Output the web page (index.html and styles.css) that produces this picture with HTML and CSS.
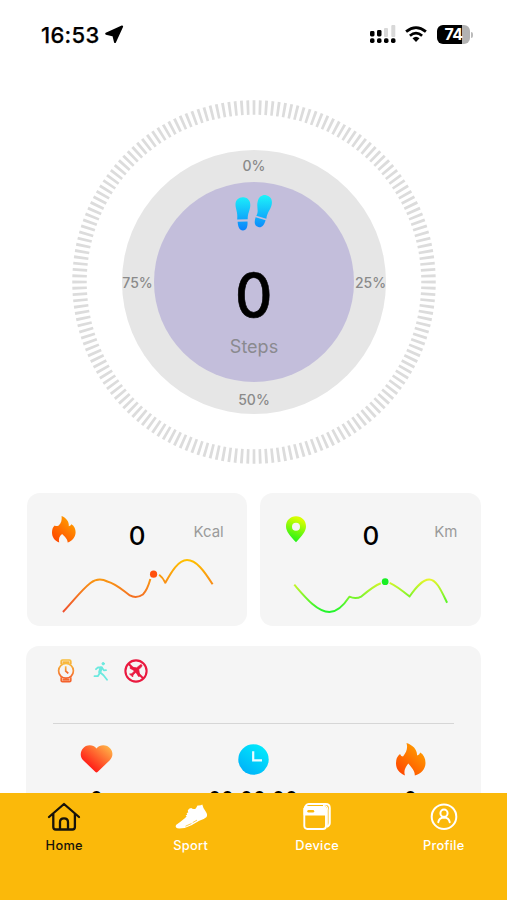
FILE: index.html
```html
<!DOCTYPE html>
<html lang="en">
<head>
<meta charset="utf-8">
<title>Activity</title>
<link rel="stylesheet" href="styles.css">
</head>
<body>
<svg class="defs" width="0" height="0" aria-hidden="true">
  <defs>
    <linearGradient id="fire" x1="0" y1="1" x2=".8" y2="0"><stop offset="0" stop-color="#ff3d00"/><stop offset="1" stop-color="#ffa500"/></linearGradient>
    <linearGradient id="fireline" x1="0" y1="1" x2="0" y2="0"><stop offset="0" stop-color="#ef5030"/><stop offset="1" stop-color="#ffc000"/></linearGradient>
    <linearGradient id="lime" x1="0" y1="1" x2=".3" y2="0"><stop offset="0" stop-color="#00f01c"/><stop offset="1" stop-color="#d8ff00"/></linearGradient>
    <linearGradient id="limeline" x1="0" y1="1" x2="0" y2="0"><stop offset="0" stop-color="#20f52c"/><stop offset="1" stop-color="#e6f52a"/></linearGradient>
    <linearGradient id="steps" gradientUnits="userSpaceOnUse" x1="0" y1="0" x2="0" y2="36"><stop offset="0" stop-color="#1cf4fa"/><stop offset="1" stop-color="#0a80fc"/></linearGradient>
    <linearGradient id="watch" x1="0" y1="1" x2="0" y2="0"><stop offset="0" stop-color="#f4602c"/><stop offset="1" stop-color="#f8bd3c"/></linearGradient>
    <linearGradient id="heart" x1=".2" y1=".8" x2=".9" y2=".1"><stop offset="0" stop-color="#ff1515"/><stop offset="1" stop-color="#ffad45"/></linearGradient>
    <linearGradient id="clock" x1="0" y1="1" x2=".7" y2="0"><stop offset="0" stop-color="#00aaf8"/><stop offset="1" stop-color="#00e9fc"/></linearGradient>
    <symbol id="flame" viewBox="0 0 30 33"><path d="M10.5 0C17 2 21.5 7 21 12.5Q23.5 11.8 24.3 9.5C27.5 11.5 29.5 15 29.5 20C29.5 26 25 31 18.8 32.5C19 28 16 25 12.3 20.5C9 25 7.5 28 9 32.5C3 30 0 26 0 20Q0 14 4 11Q5 13.5 7 13.5C10.5 9 12 5 10.5 0Z"/></symbol>
  </defs>
</svg>

<div class="screen">
  <header class="status">
    <div class="status-left">
      <span class="time">16:53</span>
      <svg width="19" height="19" viewBox="0 0 19 19"><path d="M17.1 1.5L10 17L8.4 10.5L1.2 8.7Z" fill="#000" stroke="#000" stroke-width="2" stroke-linejoin="round"/></svg>
    </div>
    <div class="status-right">
      <svg width="26" height="19" viewBox="0 0 26 19"><g fill="#d8d8d8"><rect x="14" y="3" width="4" height="9" rx="1"/><rect x="21.3" y="0" width="4" height="12" rx="1"/></g><rect x="0" y="6" width="4.5" height="5.5" rx="1.4"/><rect x="7" y="5" width="4.5" height="6.5" rx="1.4"/><rect x="0" y="13.3" width="4.5" height="4.6" rx="1.6"/><rect x="7" y="13.3" width="4.5" height="4.6" rx="1.6"/><rect x="14" y="13.3" width="4.5" height="4.6" rx="1.6"/><rect x="21" y="13.3" width="4.5" height="4.6" rx="1.6"/></svg>
      <svg class="wifi" width="22" height="17" viewBox="0 0 22 17" fill="none" stroke="#000" stroke-width="2.8"><path d="M1.1 5.7Q11-2.5 20.9 5.7M4.9 9.7Q11 4.6 17.1 9.7"/><path d="M7.5 12.3Q11 9.3 14.5 12.3L11 16Z" fill="#000" stroke="none"/></svg>
      <div class="battery"><span>74</span></div>
      <i class="battery-tip"></i>
    </div>
  </header>

  <section class="dial">
    <svg class="ticks" width="364" height="364" viewBox="0 0 364 364"><circle cx="182" cy="182" r="174.5" pathLength="360" fill="none" stroke="#dcdcdc" stroke-width="14.5" stroke-dasharray=".9 1.1" stroke-dashoffset=".45"/></svg>
    <div class="ring">
      <span class="mark top">0%</span>
      <span class="mark left">75%</span>
      <div class="core">
        <svg class="feet" width="38" height="37" viewBox="0 0 38 37" fill="url(#steps)"><path d="M2.2 24.5C3 17 .5 14 .5 9.5C.5 5 4 2 8.3 2.3C13 2.7 15.8 6 15.3 11C14.8 16 12.7 18 12.7 24.2ZM2.6 26.7L12.5 26.4C12.9 31.5 11.5 35.3 8 35.4C4.5 35.5 3 32 2.6 26.7Z"/><path d="M21.3 20.8C24.3 15.5 21.2 12.5 22.7 6.5C23.8 1.5 27.5-.5 31.2.2C35.8 1.2 37.8 5 36.6 10C35.4 15 31.8 18 31.4 23.8ZM20.6 22.3L30.6 25.2C29.1 30.2 26.6 33 23.4 32.1C19.2 31 19.1 26.9 20.6 22.3Z"/></svg>
        <strong>0</strong>
        <span class="unit">Steps</span>
      </div>
      <span class="mark right">25%</span>
      <span class="mark bottom">50%</span>
    </div>
  </section>

  <section class="cards">
    <article class="card">
      <div class="card-head">
        <svg width="24" height="27" viewBox="0 0 30 33" preserveAspectRatio="none" fill="url(#fire)"><path d="M12 0C18 2.5 21.5 7 21 12.5Q23.5 11.8 24.3 10C28 12 29.5 16 29.5 20C29.5 26 25 31 19.5 32.5C20 29 16 25 12.6 22C9 25 8 28 9 32.5C3 30 0 26 0 20Q0 14 3.5 11.5Q5 12.7 8 11.8C11.7 9 12.5 5 12 0Z"/></svg>
        <strong>0</strong><span>Kcal</span>
      </div>
      <svg class="chart" width="221" height="74" viewBox="26.5 552 221 74"><path d="M62.5 612C72 602 81 590 90 583Q98 577 107 581.5C116 584 122 590 129.5 595.5Q136 599 142.5 594.5Q147 590 150 579M158.8 574.8Q162.5 577.5 165 582.7C171 572 178 560 186.7 560C196 560 204 571 212.3 584.3" fill="none" stroke="url(#fireline)" stroke-width="2" stroke-linejoin="round"/><circle cx="153.2" cy="574.2" r="3.6" fill="#ff500d"/></svg>
    </article>
    <article class="card">
      <div class="card-head km">
        <svg width="22" height="27" viewBox="0 0 22 27"><path d="M11 .2C16.8.2 21 4.5 21 10.3C21 15.5 17 20 11 26.3C5 20 1 15.5 1 10.3C1 4.5 5.2.2 11 .2ZM11 6.8a4 4 0 1 0 0 8a4 4 0 1 0 0-8Z" fill="url(#lime)" fill-rule="evenodd"/></svg>
        <strong>0</strong><span>Km</span>
      </div>
      <svg class="chart" width="221" height="74" viewBox="260 552 221 74"><path d="M294.3 584.7C305 597 317 612 329.5 612C338 612 344 605 349.5 596.7Q356 599.5 361.7 596.3C368 591 374 586 381 583.3M389.8 582.8C397 586 403 591 409.7 596.5C415 589 422 579.5 429.5 579.5C437 579.5 442 592 447.3 602.7" fill="none" stroke="url(#limeline)" stroke-width="2" stroke-linejoin="round"/><circle cx="385.3" cy="581.7" r="3.4" fill="#18ef24"/></svg>
    </article>
  </section>

  <section class="panel">
    <div class="modes">
      <svg width="18" height="24" viewBox="0 0 18 24" fill="none" stroke="url(#watch)" stroke-width="1.7"><path d="M4.2 5.2V2.3Q4.2 1 5.5 1H12.5Q13.8 1 13.8 2.3V5.2M4.2 18.3V21.5Q4.2 22.7 5.5 22.7H12.5Q13.8 22.7 13.8 21.5V18.3M5.5 3.2H12.5M5.5 20.7H12.5"/><circle cx="9" cy="11.8" r="7.4"/><path d="M8.7 7.3V12L11.3 14.3"/></svg>
      <svg width="16" height="20" viewBox="0 0 16 20" fill="none" stroke="#6be9df" stroke-width="1.8" stroke-linecap="round" stroke-linejoin="round"><circle cx="10.2" cy="2.7" r="1.2" fill="#6be9df" stroke-width="1"/><path d="M3 8.2L5 6.3L9 6.5L7 11.3L10.5 14.3L14 18.8M9 6.8L10.8 9.3L13 9.2M6.8 12L4.8 15.2L1.5 15.2"/><path d="M8 7L6.7 11" stroke-width="3"/></svg>
      <svg width="24" height="24" viewBox="0 0 24 24"><path d="M17.6 5.8Q18.7 6.7 17.3 8.1L14.8 10.6L15.8 17.2L14.5 17.5L12 13.2L9 16L8.7 18L7.2 16.5L5.5 15L7.8 14.7L10.6 11.8L6 9.3L6.4 8L12.7 8.8L15.5 6.4Q16.8 5.2 17.6 5.8Z" fill="#ea193f" stroke="#ea193f" stroke-width=".7"/><g fill="none" stroke="#ea193f" stroke-width="2.1"><circle cx="12" cy="12" r="10.6"/><path d="M4.5 4.7L19.3 19.4"/></g></svg>
    </div>
    <hr>
    <div class="stats">
      <div><svg width="33" height="33" viewBox="0 0 33 33"><path d="M16.5 5.5C20 1 27 1.4 30.5 5.7C33.4 9.4 32.9 14 29.8 17.2L17.8 28.8Q16.5 30 15.2 28.8L3.2 17.2C0 14 0 9.4 2.7 5.7C6 1.4 13 1 16.5 5.5Z" fill="url(#heart)"/></svg><span>0</span></div>
      <div><svg width="33" height="33" viewBox="0 0 33 33"><circle cx="16.5" cy="16.5" r="15.2" fill="url(#clock)"/><path d="M16.2 8.3V17.3H25" fill="none" stroke="#e9fcff" stroke-width="2.2"/></svg><span>00:00:00</span></div>
      <div><svg width="30" height="33" fill="url(#fire)"><use href="#flame"/></svg><span>0</span></div>
    </div>
  </section>
</div>

<nav class="tabs">
  <a class="active"><svg width="34" height="30" viewBox="0 0 34 30" fill="none" stroke="currentColor" stroke-width="2.3" stroke-linecap="round" stroke-linejoin="round"><path d="M2 15L17 2L32 15M6.3 12V25Q6.3 27.5 8.8 27.5H25.4Q27.9 27.5 27.9 25V12M13 27V20Q13 16.3 17 16.3Q21 16.3 21 20V27"/></svg>Home</a>
  <a><svg width="34" height="30" viewBox="0 0 34 30" fill="currentColor"><path d="M2 22.9Q7 19.5 10.5 16.5L12.6 14.5L11.6 13.2L13.2 12.7L12.6 10.9L14.3 10.5L13.7 8.7Q14.6 6.3 17.2 6Q19.2 7.8 21.8 6.4L23.5 3.4Q26.4 3.9 28.3 2.4Q28.9 6 32 9.9Q34 12.9 32.3 15.3Q29.8 17.6 25.3 18.7L17.5 23.3Q12 26.4 5.3 26.4Q.6 26 2 22.9Z"/><path d="M11.5 24.2L17.5 21.5M18.7 20.6L23 18.1" fill="none" stroke="#fbb90a" stroke-width=".7"/></svg>Sport</a>
  <a><svg width="34" height="30" viewBox="0 0 34 30" fill="none" stroke="currentColor" stroke-width="1.9" stroke-linejoin="round"><path d="M4.5 7Q5.3 2.3 8.8 2H25.7Q29.8 2 29.8 6V21Q29.8 23.7 26.7 24.8"/><rect x="4.3" y="5" width="21.7" height="22" rx="3"/><path d="M4.5 12.5V7Q5 5 7 5H23Q26 5 26 8V12.5Z" fill="currentColor"/><path d="M23 3.5Q27.8 3.3 27.8 8V24" stroke-width="1.2"/><path d="M8.5 9.2H13" stroke="#fbb90a" stroke-width="2.4" stroke-linecap="round"/></svg>Device</a>
  <a><svg width="34" height="30" viewBox="0 0 34 30" fill="none" stroke="currentColor" stroke-width="2" stroke-linecap="round"><circle cx="17" cy="14.7" r="12.3"/><circle cx="17" cy="11.2" r="3.6"/><path d="M11.3 20.2Q12 15.6 17 15.5Q22 15.6 22.7 20.2"/></svg>Profile</a>
</nav>
</body>
</html>
```
FILE: styles.css
```css
* { box-sizing: border-box; }
body { margin: 0; height: 900px; display: flex; flex-direction: column; overflow: hidden; background: #fff; color: #000; font-family: Inter, "Liberation Sans", sans-serif; }
svg { display: block; flex: none; }
.defs { position: absolute; }
.screen { height: 793px; flex: none; overflow: hidden; display: flex; flex-direction: column; }

.status { height: 100px; flex: none; padding: 24px 34px 0 41px; display: flex; justify-content: space-between; align-items: flex-start; }
.status-left, .status-right { display: flex; align-items: center; height: 21px; }
.time { font-size: 22px; font-weight: 500; -webkit-text-stroke: .25px #000; letter-spacing: .3px; }
.status-left svg { margin-left: 5px; }
.wifi { margin: 0 10px 0 9px; }
.battery { width: 33px; height: 19px; border-radius: 6px; background: linear-gradient(90deg, #000 75%, #b2b2b2 75%); color: #fff; font-size: 16px; line-height: 19px; font-weight: 700; text-align: center; letter-spacing: -.5px; }
.battery-tip { width: 2px; height: 6px; margin-left: 1px; border-radius: 0 2px 2px 0; background: #bbb; }

.dial { width: 364px; height: 364px; flex: none; margin-left: 72px; display: grid; place-items: center; }
.ticks, .ring { grid-area: 1 / 1; }
.ring { width: 264px; height: 264px; border-radius: 50%; background: #e6e6e6; display: grid; grid-template: 32px 200px 32px / 32px 200px 32px; place-items: center; }
.mark { color: #8a8a8a; font-size: 14px; font-weight: 500; line-height: 18px; white-space: nowrap; }
.top { grid-area: 1 / 2; }
.left { grid-area: 2 / 1; padding: 2px 1px 0 0; }
.right { grid-area: 2 / 3; padding: 2px 0 0 1px; }
.bottom { grid-area: 3 / 2; padding-top: 3px; }
.core { grid-area: 2 / 2; width: 200px; height: 200px; border-radius: 50%; background: #c3bedb; display: flex; flex-direction: column; align-items: center; padding-top: 13px; }
.core strong { font-size: 61px; line-height: 64px; font-weight: 500; margin-top: 31px; transform: scaleX(.95); -webkit-text-stroke: .6px #000; }
.unit { color: #8a8a8f; font-size: 18px; line-height: 22px; margin-top: 9px; }

.cards { display: flex; gap: 13px; margin: 29px 26px 0 26.5px; flex: none; }
.card { flex: 1; height: 133px; border-radius: 13px; background: #f5f5f5; }
.card-head { height: 59px; display: grid; grid-template-columns: 24px 1fr 50px; align-items: start; padding: 23px 23.5px 0 25px; }
.card-head strong { font-size: 26px; line-height: 30px; font-weight: 500; text-align: center; padding: 5px 0 0 25px; }
.card-head span { color: #9b9b9b; font-size: 15px; line-height: 20px; margin-top: 6px; text-align: right; }
.chart { width: 100%; height: 74px; }

.panel { height: 250px; flex: none; margin: 19.5px 26px 0; border-radius: 13px 13px 0 0; background: #f5f5f5; padding: 13px 27px 0; }
.modes { display: flex; align-items: center; gap: 18px; height: 25px; padding-left: 4px; }
.modes svg:nth-child(3) { margin-left: -3.5px; }
.panel hr { height: 1.5px; border: 0; margin: 39px 0 0; background: #d6d6d6; }
.stats { display: grid; grid-template-columns: 87px 226px 89px; padding-top: 19px; }
.stats div { display: flex; flex-direction: column; align-items: center; }
.stats span { font-size: 20px; line-height: 24px; font-weight: 500; margin-top: 11px; }

.tabs { height: 107px; flex: none; display: grid; grid-template-columns: repeat(4, 126.5px); background: #fbb90a; padding: 9px 0 0 1px; }
.tabs a { display: flex; flex-direction: column; align-items: center; color: #fff; font-size: 12.8px; line-height: 18px; font-weight: 500; letter-spacing: .3px; }
.tabs svg { margin-bottom: 5px; }
.tabs .active { color: #17130a; }
```
